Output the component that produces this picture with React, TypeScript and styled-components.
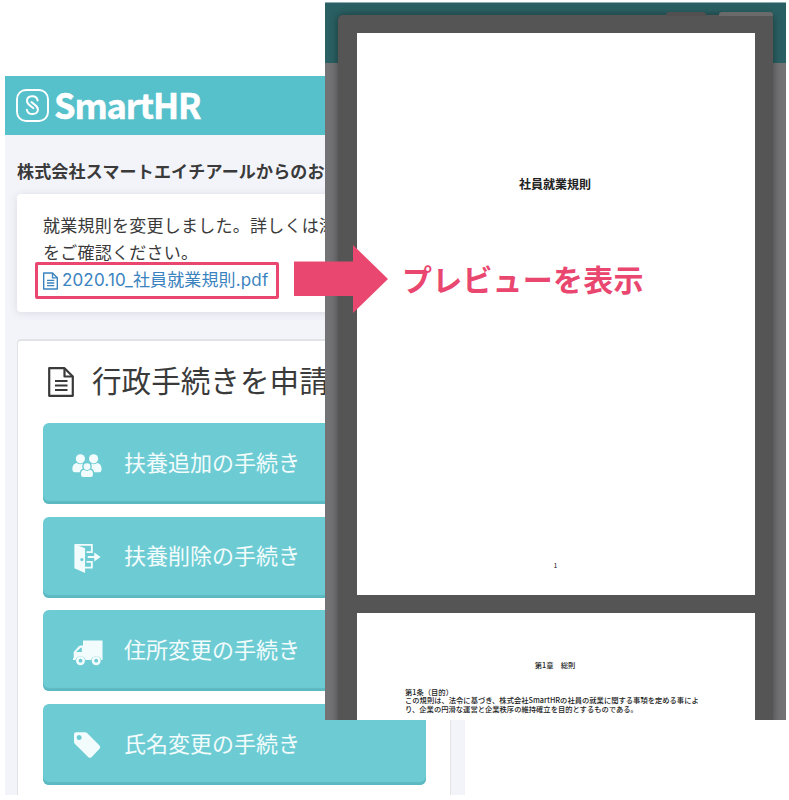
import React from "react";
import styled, { createGlobalStyle } from "styled-components";

const Global = createGlobalStyle`
  * { box-sizing: border-box; }
  body { margin: 0; background: #fff; }
`;

const jp = `"Noto Sans CJK JP", sans-serif`;
const accent = "#e9476f";

const Stage = styled.main`
  position: relative;
  width: 789px;
  height: 800px;
  overflow: hidden;
  background: #fff;
  padding: 76px 0 0 5px;
  font-family: ${jp};
  color: #3a3a3a;
`;

const Portal = styled.section`
  width: 460px;
  height: 719px;
  background: #f3f4fa;
  overflow: hidden;
`;

const Header = styled.header`
  height: 59px;
  padding: 0 0 0 11px;
  display: flex;
  align-items: center;
  gap: 5px;
  background: #56c0cb;
  color: #fff;
`;

const LogoMark = styled.svg`
  width: 33px;
  height: 33px;
  flex: none;
`;

const Brand = styled.span`
  padding-bottom: 2px;
  font: 700 34.5px/57px ${jp};
  letter-spacing: -1.15px;
  -webkit-text-stroke: 0.5px #fff;
`;

const NoticeHeading = styled.h2`
  margin: 21px 0 9px 12px;
  font-size: 17px;
  line-height: 29px;
  font-weight: 700;
  letter-spacing: 0.18px;
  white-space: nowrap;
`;

const NoticeCard = styled.div`
  margin: 0 14px 0 12px;
  height: 118px;
  padding: 17px 0 0 26px;
  background: #fff;
  border-radius: 4px;
  box-shadow: 0 1px 8px rgba(60, 60, 80, 0.13);
`;

const NoticeText = styled.p`
  margin: 0;
  font-size: 17px;
  line-height: 27px;
  letter-spacing: 0.25px;
  white-space: nowrap;
`;

const FileLink = styled.a`
  display: flex;
  align-items: center;
  width: 244px;
  height: 37px;
  margin: -3px 0 0 -8px;
  padding-left: 5px;
  gap: 4px;
  border: 3px solid ${accent};
  border-radius: 2px;
  color: #3b83bf;
  font: 400 17px/31px Inter, ${jp};
  letter-spacing: 0.14px;
  white-space: nowrap;
`;

const MenuCard = styled.div`
  margin: 27px 14px 0 12px;
  height: 500px;
  padding: 0 24px 0 25px;
  background: #fff;
  border: 1px solid #e2e3e6;
  border-top-width: 2px;
  border-radius: 4px;
`;

const MenuTitle = styled.h1`
  display: flex;
  align-items: center;
  gap: 18px;
  height: 82px;
  margin: 0;
  padding-left: 5px;
  font-size: 29.6px;
  font-weight: 400;
  white-space: nowrap;
`;

const MenuTitleText = styled.span`
  padding-bottom: 6px;
`;

const Actions = styled.div`
  display: grid;
  grid-auto-rows: 81px;
  row-gap: 12.7px;
`;

const Action = styled.button`
  display: flex;
  align-items: center;
  padding: 0 0 0 28px;
  gap: 21px;
  border: 0;
  border-radius: 6px;
  background: #6dccd3;
  box-shadow: inset 0 -3px 1px #5db9c1;
  color: #f3fcfd;
  font: 400 22px/32px ${jp};
  text-align: left;
`;

const ActionLabel = styled.span`
  padding-bottom: 6px;
`;

const ActionIcon = styled.svg`
  width: 32px;
  height: 32px;
  flex: none;
`;

const Preview = styled.section`
  position: absolute;
  left: 325px;
  top: 2px;
  width: 461px;
  height: 718px;
  padding: 12px 13px 0;
  background: linear-gradient(#2a6063 0 60px, #737376 60px);
  border-top: 1px solid #91adb4;
  overflow: hidden;
`;

const Viewer = styled.div`
  position: relative;
  height: 710px;
  padding: 18px 18px 0 19px;
  background: #555;
  border-radius: 5px 3px 0 0;
  box-shadow: 0 0 8px rgba(0, 0, 0, 0.42);
`;

const Tab = styled.span<{ $left: number; $width: number; $color: string }>`
  position: absolute;
  top: -3px;
  left: ${(p) => p.$left}px;
  width: ${(p) => p.$width}px;
  height: 4px;
  border-radius: 3px 3px 0 0;
  background: ${(p) => p.$color};
`;

const Sheet = styled.article<{ $height: number }>`
  height: ${(p) => p.$height}px;
  margin-bottom: 18px;
  background: #fff;
  color: #222;
  display: flex;
  flex-direction: column;
`;

const DocTitle = styled.h2`
  margin: 142px 2px 0 0;
  text-align: center;
  font-size: 12px;
  line-height: 18px;
  font-weight: 700;
`;

const PageNumber = styled.span`
  margin: auto 1px 23px 0;
  text-align: center;
  font: 7px/14px ${jp};
`;

const Chapter = styled.h3`
  margin: 45px 2px 0 0;
  text-align: center;
  font-size: 7.3px;
  line-height: 14px;
  font-weight: 500;
`;

const Clause = styled.p`
  margin: 16px 0 0 48px;
  font-size: 7.3px;
  line-height: 8.4px;
  font-weight: 500;
  white-space: nowrap;
`;

const Callout = styled.div`
  position: absolute;
  left: 294px;
  top: 245px;
  height: 68px;
  display: flex;
  align-items: center;
  gap: 14px;
  color: ${accent};
  font-size: 30px;
  font-weight: 700;
  letter-spacing: 0.2px;
  white-space: nowrap;
`;

const CalloutText = styled.span`
  padding-bottom: 3px;
`;

const FileIcon = ({ width, height, stroke }: { width: number; height: number; stroke: number }) => (
  <svg width={width} height={height} viewBox="0 0 26 30" fill="none" stroke="currentColor" strokeWidth={stroke} strokeLinejoin="round">
    <path d="M1.2 1.2H16.5L24.8 9.5V28.8H1.2Z" />
    <path d="M16.5 1V9.5H25M7 14H19.5M7 18.5H19.5M7 23H19.5" />
  </svg>
);

const FamilyIcon = () => (
  <ActionIcon viewBox="0 -1 32 32" fill="currentColor">
    <circle cx="9.4" cy="9.8" r="4.6" />
    <circle cx="22.6" cy="9.8" r="4.6" />
    <path d="M1.4 20C1.4 16 3.6 14.2 5.8 14Q9 16.4 12 14.6Q10.4 17 11.6 19.6Q9 20.8 8.8 23.2H4Q1.4 23.2 1.4 20Z" />
    <path d="M30.6 20C30.6 16 28.4 14.2 26.2 14Q23 16.4 20 14.6Q21.6 17 20.4 19.6Q23 20.8 23.2 23.2H28Q30.6 23.2 30.6 20Z" />
    <circle cx="16" cy="17.6" r="3.4" />
    <path d="M10 25.4Q10 21.2 12.8 20.8Q16 23 19.2 20.8Q22 21.2 22 25.4Q22 27.9 19.8 27.9H12.2Q10 27.9 10 25.4Z" />
  </ActionIcon>
);

const DoorIcon = () => (
  <ActionIcon viewBox="0 -1 32 33" fill="currentColor">
    <path fillRule="evenodd" d="M3 2L14 6.5V32L3 27ZM10.7 16.5a1.7 1.7 0 1 0 0 3.4a1.7 1.7 0 0 0 0-3.4Z" />
    <path d="M4 3H21V10.5H15.5M16.8 15.5H25M15.5 20.5H21V26.5H13.5" fill="none" stroke="currentColor" strokeWidth="1.9" />
    <path d="M23.5 10.8L30 15.5L23.5 20.2Z" />
  </ActionIcon>
);

const TruckIcon = () => (
  <ActionIcon viewBox="0 0.5 32 32" fill="currentColor">
    <path fillRule="evenodd" d="M12 6H31.5V25.5H30.2A5.2 5.2 0 0 0 20.2 25.5H14.5A5.2 5.2 0 0 0 4.5 25.5H2V23.5H2.7V17.5L7.5 12Q8.5 11 10 11H12ZM10.8 13.3H9.7L5 17.4H10.8Z" />
    <g fill="none" stroke="currentColor" strokeWidth="2.6">
      <circle cx="9.5" cy="26.2" r="3.2" />
      <circle cx="25.2" cy="26.2" r="3.2" />
    </g>
  </ActionIcon>
);

const TagIcon = () => (
  <ActionIcon viewBox="0 0.8 32 32" fill="currentColor">
    <path fillRule="evenodd" d="M3 6Q3 4 5 4H14Q15.3 4 16.3 5L28.5 17.3Q30 19 28.5 20.5L20.5 29Q19 30.3 17.4 29L4 15.8Q3 14.8 3 13.3ZM8.2 6.7a2.5 2.5 0 1 0 0 5a2.5 2.5 0 0 0 0-5Z" />
  </ActionIcon>
);

const actions = [
  { label: "扶養追加の手続き", Icon: FamilyIcon },
  { label: "扶養削除の手続き", Icon: DoorIcon },
  { label: "住所変更の手続き", Icon: TruckIcon },
  { label: "氏名変更の手続き", Icon: TagIcon },
];

export default function App() {
  return (
    <Stage>
      <Global />
      <Portal>
        <Header>
          <LogoMark viewBox="0 0 33 33" fill="none" stroke="#fff">
            <rect x="1" y="1" width="31" height="31" rx="9" strokeWidth="1.9" />
            <g strokeWidth="2" strokeLinecap="round" strokeLinejoin="round">
              <path d="M21.6 11.4C20.6 5.6 11 5.8 11 12C11 15.6 14.2 16.4 17.4 19.2" />
              <path d="M10.9 20.8C11.9 26.6 21.9 26.4 21.9 20.4C21.9 16.8 18.4 15.8 15.4 13.1" />
            </g>
          </LogoMark>
          <Brand>SmartHR</Brand>
        </Header>
        <NoticeHeading>株式会社スマートエイチアールからのお知らせ</NoticeHeading>
        <NoticeCard>
          <NoticeText>就業規則を変更しました。詳しくは添付</NoticeText>
          <NoticeText>をご確認ください。</NoticeText>
          <FileLink>
            <FileIcon width={15} height={18} stroke={2.4} />
            2020.10_社員就業規則.pdf
          </FileLink>
        </NoticeCard>
        <MenuCard>
          <MenuTitle>
            <FileIcon width={26} height={30} stroke={2.2} />
            <MenuTitleText>行政手続きを申請</MenuTitleText>
          </MenuTitle>
          <Actions>
            {actions.map(({ label, Icon }) => (
              <Action key={label}>
                <Icon />
                <ActionLabel>{label}</ActionLabel>
              </Action>
            ))}
          </Actions>
        </MenuCard>
      </Portal>
      <Preview>
        <Viewer>
          <Tab $left={328} $width={40} $color="#514f4f" />
          <Tab $left={381} $width={54} $color="#6a6a6a" />
          <Sheet $height={562}>
            <DocTitle>社員就業規則</DocTitle>
            <PageNumber>1</PageNumber>
          </Sheet>
          <Sheet $height={130}>
            <Chapter>第1章　総則</Chapter>
            <Clause>
              第1条（目的）
              <br />
              この規則は、法令に基づき、株式会社SmartHRの社員の就業に関する事項を定める事によ
              <br />
              り、企業の円滑な運営と企業秩序の維持確立を目的とするものである。
            </Clause>
          </Sheet>
        </Viewer>
      </Preview>
      <Callout>
        <svg width="94" height="68" viewBox="0 0 94 68" fill="currentColor">
          <path d="M0 16.5H59V0L94 34L59 68V51H0Z" />
        </svg>
        <CalloutText>プレビューを表示</CalloutText>
      </Callout>
    </Stage>
  );
}
